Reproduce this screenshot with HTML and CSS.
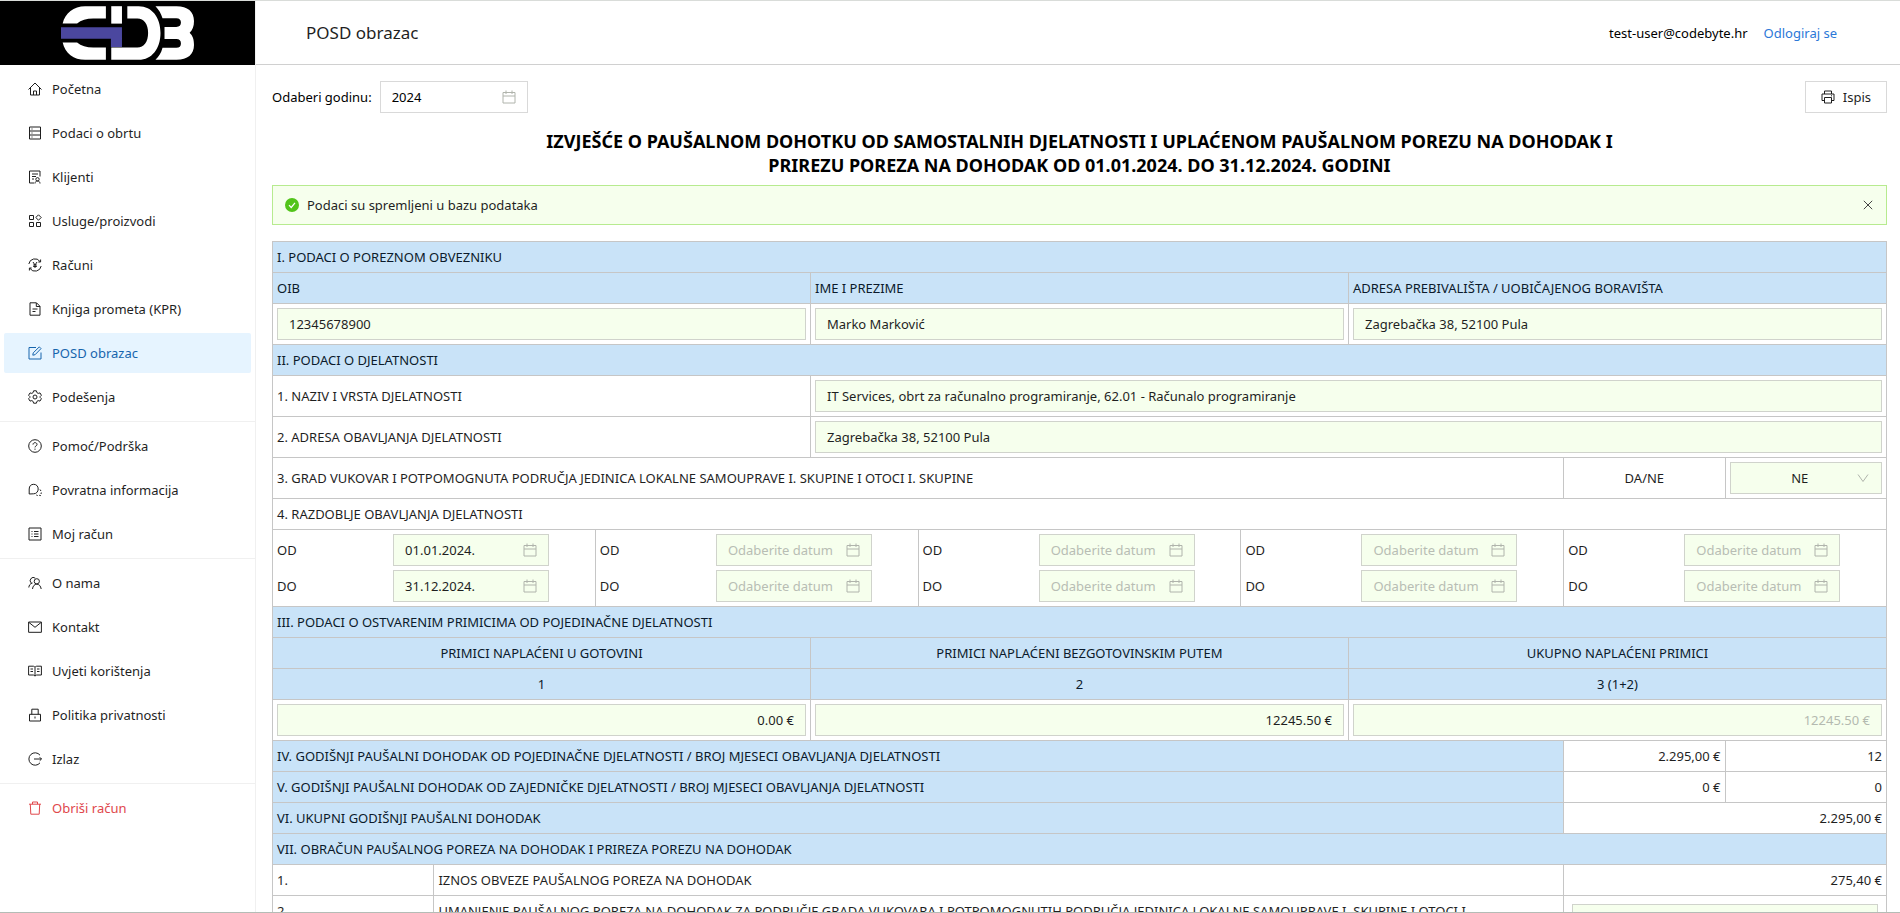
FILE: index.html
```
<!DOCTYPE html>
<html lang="hr">
	<head>
		<title>POSD obrazac</title>

		<meta name="viewport" content="width=device-width">
		<meta charset="utf-8">

		<link rel="stylesheet" href="styles.css">
	</head>

	<body>
		<!-- shared icons -->
		<svg class="defs" aria-hidden="true">
			<symbol id="i-calendar" viewBox="0 0 14 14"><path d="M1 2.500h12v10.500H1zM1 6h12M4 .5v3.500M10 .5v3.500"/></symbol>
			<symbol id="i-down" viewBox="0 0 14 14"><path d="M2 3.500l5 7 5-7"/></symbol>
		</svg>

		<div class="app">
			<aside class="sidebar">
				<a class="logo" href="#" aria-label="CDB">
					<svg viewBox="0 0 400 160">
						<path fill="#fff" d="M5 52C12 20 38 0 72 0H134V37H96C76 37 60 42 48 52Z"/>
						<path fill="#fff" d="M5 108C12 140 38 160 72 160H134V123H96C76 123 60 118 48 108Z"/>
						<path fill="#fff" d="M150 0H182V52H150Z"/>
						<path fill="#fff" d="M198 0H232C272 0 297 34 297 80S272 160 232 160H150V123H228C248 123 260 106 260 80S248 37 228 37H198Z"/>
						<path fill="#fff" fill-rule="evenodd" d="M282 0H345C378 0 397 16 397 44C397 60 393 70 384 79C393 88 397 98 397 116C397 144 378 160 345 160H282C292 150 299 140 303 124H344C354 124 358 119 358 111S354 98 344 98H309V62H344C354 62 358 57 358 49S354 36 344 36H303C299 22 292 10 282 0Z"/>
						<path fill="#4b479f" d="M0 63H182V122H149V97H0Z"/>
					</svg>
				</a>
				<nav class="menu">
					<ul>
						<li><a href="#"><svg class="icon" viewBox="0 0 14 14"><path d="M.5 7.500L7 1l6.500 6.500M2.500 6v7h9V6M5.500 13V9h3v4"/></svg>Početna</a></li>
						<li><a href="#"><svg class="icon" viewBox="0 0 14 14"><path d="M1.500 1h11v12h-11zM1.500 5h11M1.500 9h11M3.500 3h1M3.500 7h1M3.500 11h1"/></svg>Podaci o obrtu</a></li>
						<li><a href="#"><svg class="icon" viewBox="0 0 14 14"><path d="M6 13H1.500V1h10.500v5.500M4 4h6M4 6.500h4M4 9h2M7 13.500c0-1.500 1-2.500 2.500-2.500s2.500 1 2.500 2.500"/><circle cx="9.500" cy="9.300" r="1.700"/></svg>Klijenti</a></li>
						<li><a href="#"><svg class="icon" viewBox="0 0 14 14"><path d="M1.500 1.500h4v4h-4zM1.500 8.500h4v4h-4zM8.500 8.500h4v4h-4zM10.500.8l2.700 2.700-2.700 2.700-2.700-2.700z"/></svg>Usluge/proizvodi</a></li>
						<li><a href="#"><svg class="icon" viewBox="0 0 14 14"><path d="M.8 6A6.200 6.200 0 0 1 12 3.500M13.200 8A6.200 6.200 0 0 1 2 10.500M12.600 1.500v2.500h-2.300M1.400 12.500V10h2.300M5 4l2 3 2-3M7 7v3M5.200 7h3.600M5.200 8.500h3.600"/></svg>Računi</a></li>
						<li><a href="#"><svg class="icon" viewBox="0 0 14 14"><path d="M2 .8h6.500L12 4.300v8.900H2zM8.300 1v3.500H12M4.500 7h5M4.500 9.500h3"/></svg>Knjiga prometa (KPR)</a></li>
						<li><a class="selected" href="#"><svg class="icon" viewBox="0 0 14 14"><path d="M8 1.500H1v11.500h12V6.500M4.800 9.200l.4-2.300L11.300.9l1.700 1.700L7.100 8.700z"/></svg>POSD obrazac</a></li>
						<li><a href="#"><svg class="icon" viewBox="0 0 14 14"><path d="M5.600.8h2.800l.5 1.800 1.300.8 1.800-.5 1.400 2.400L12.100 6.600v.8l1.300 1.300-1.400 2.400-1.800-.5-1.300.8-.5 1.800H5.600l-.5-1.800-1.300-.8-1.800.5L.6 8.700l1.300-1.300v-.8L.6 5.300 2 2.900l1.800.5 1.300-.8z"/><circle cx="7" cy="7" r="2"/></svg>Podešenja</a></li>
					</ul>
					<ul>
						<li><a href="#"><svg class="icon" viewBox="0 0 14 14"><circle cx="7" cy="7" r="6.300"/><path d="M5 5.600C5 3 9 3 9 5.500 9 7 7 6.900 7 8.400M7 9.600v1.200"/></svg>Pomoć/Podrška</a></li>
						<li><a href="#"><svg class="icon" viewBox="0 0 14 14"><path d="M1.200 11V6C1.200 3 3 1.300 5.700 1.300S10.200 3.300 10.200 6 8.300 10.800 5.600 10.800zM12 6.500l1 1.500M13.300 9.500l-.3 1.500M12.800 12.600l-1.600-.3M9.700 12.600L8.300 12"/></svg>Povratna informacija</a></li>
						<li><a href="#"><svg class="icon" viewBox="0 0 14 14"><path d="M1 1h12v12H1zM6 4.500h4.500M6 7h4.500M6 9.500h4.500M3.500 4.500h1M3.500 7h1M3.500 9.500h1"/></svg>Moj račun</a></li>
					</ul>
					<ul>
						<li><a href="#"><svg class="icon" viewBox="0 0 14 14"><circle cx="8.800" cy="5.300" r="2.600"/><path d="M4.500 13c.3-3 2-4.800 4.300-4.800S12.700 10 13.200 13M3.300 7A2.800 2.800 0 1 1 7.300 2.200M.8 11.500C1 9.500 2 7.500 4.500 7"/></svg>O nama</a></li>
						<li><a href="#"><svg class="icon" viewBox="0 0 14 14"><path d="M.6 2h12.800v10.300H.6zM1 2.500l6 4.800 6-4.800"/></svg>Kontakt</a></li>
						<li><a href="#"><svg class="icon" viewBox="0 0 14 14"><path d="M.6 2.200h4.800L7 3.200l1.600-1h4.800v8.800H8.600L7 12l-1.600-1H.6zM7 3.500V12M2.500 5h2.500M2.500 7.500h2.500M9 5h2.500M9 7.500h2.500"/></svg>Uvjeti korištenja</a></li>
						<li><a href="#"><svg class="icon" viewBox="0 0 14 14"><path d="M1.500 6.300h11V13h-11zM3.800 6.300V1.200h6.400v5.100M7 8.500v2"/></svg>Politika privatnosti</a></li>
						<li><a href="#"><svg class="icon" viewBox="0 0 14 14"><path d="M12 3.200A6.200 6.200 0 1 0 12 10.800M6 7h7.500M11.700 5.200L13.500 7l-1.800 1.800"/></svg>Izlaz</a></li>
					</ul>
					<ul>
						<li><a class="danger" href="#"><svg class="icon" viewBox="0 0 14 14"><path d="M1 3.200h12M2.300 3.200l.5 10h8.400l.5-10M4.500 3.200V1h5v2.200"/></svg>Obriši račun</a></li>
					</ul>
				</nav>
			</aside>

			<div class="page">
				<header class="topbar">
					<h1>POSD obrazac</h1>
					<div class="user">
						<span>test-user@codebyte.hr</span>
						<a href="#">Odlogiraj se</a>
					</div>
				</header>

				<main>
					<div class="toolbar">
						<label for="year">Odaberi godinu:</label>
						<div class="picker year"><input id="year" type="text" value="2024"><svg class="icon"><use href="#i-calendar"/></svg></div>
						<button type="button" class="print"><svg class="icon" viewBox="0 0 14 14"><path d="M3.500 4V1h7v3M3.500 10.500H1V4h12v6.500h-2.500M3.500 7.500h7V13h-7zM10 5.800h1"/></svg>Ispis</button>
					</div>

					<h2>IZVJEŠĆE O PAUŠALNOM DOHOTKU OD SAMOSTALNIH DJELATNOSTI I UPLAĆENOM PAUŠALNOM POREZU NA DOHODAK I<br>PRIREZU POREZA NA DOHODAK OD 01.01.2024. DO 31.12.2024. GODINI</h2>

					<div class="alert" role="status">
						<svg class="check" viewBox="0 0 14 14"><circle cx="7" cy="7" r="7" fill="#52c41a"/><path d="M4 7.200l2.200 2.300L10 4.800" fill="none" stroke="#fff" stroke-width="1.200"/></svg>
						<span>Podaci su spremljeni u bazu podataka</span>
						<button type="button" class="close" aria-label="Zatvori"><svg viewBox="0 0 10 10"><path d="M.8.8l8.400 8.400M9.200.8L.8 9.200"/></svg></button>
					</div>

					<table class="posd">
						<!-- thirtieths of the width, so thirds and fifths share one grid -->
						<colgroup>
							<col class="w3"><col class="w3"><col class="w4"><col class="w2"><col class="w6"><col class="w2"><col class="w4"><col class="w3"><col class="w3">
						</colgroup>
						<tbody>
							<tr class="head"><th colspan="9">I. PODACI O POREZNOM OBVEZNIKU</th></tr>
							<tr class="head">
								<th colspan="3" id="oib">OIB</th>
								<th colspan="3" id="ime">IME I PREZIME</th>
								<th colspan="3" id="adresa">ADRESA PREBIVALIŠTA / UOBIČAJENOG BORAVIŠTA</th>
							</tr>
							<tr>
								<td colspan="3"><input type="text" aria-labelledby="oib" value="12345678900"></td>
								<td colspan="3"><input type="text" aria-labelledby="ime" value="Marko Marković"></td>
								<td colspan="3"><input type="text" aria-labelledby="adresa" value="Zagrebačka 38, 52100 Pula"></td>
							</tr>
							<tr class="head"><th colspan="9">II. PODACI O DJELATNOSTI</th></tr>
							<tr>
								<td colspan="3"><label for="naziv">1. NAZIV I VRSTA DJELATNOSTI</label></td>
								<td colspan="6"><input type="text" id="naziv" value="IT Services, obrt za računalno programiranje, 62.01 - Računalo programiranje"></td>
							</tr>
							<tr>
								<td colspan="3"><label for="sjediste">2. ADRESA OBAVLJANJA DJELATNOSTI</label></td>
								<td colspan="6"><input type="text" id="sjediste" value="Zagrebačka 38, 52100 Pula"></td>
							</tr>
							<tr>
								<td colspan="7">3. GRAD VUKOVAR I POTPOMOGNUTA PODRUČJA JEDINICA LOKALNE SAMOUPRAVE I. SKUPINE I OTOCI I. SKUPINE</td>
								<td class="center"><label for="dane">DA/NE</label></td>
								<td>
									<div class="select">
										<select id="dane"><option>NE</option><option>DA</option></select>
										<svg class="icon"><use href="#i-down"/></svg>
									</div>
								</td>
							</tr>
							<tr><td colspan="9">4. RAZDOBLJE OBAVLJANJA DJELATNOSTI</td></tr>
							<tr>
								<td colspan="2"><div class="period">
									<label for="od1">OD</label><div class="picker"><input id="od1" type="text" value="01.01.2024."><svg class="icon"><use href="#i-calendar"/></svg></div>
									<label for="do1">DO</label><div class="picker"><input id="do1" type="text" value="31.12.2024."><svg class="icon"><use href="#i-calendar"/></svg></div>
								</div></td>
								<td colspan="2"><div class="period">
									<label for="od2">OD</label><div class="picker"><input id="od2" type="text" placeholder="Odaberite datum"><svg class="icon"><use href="#i-calendar"/></svg></div>
									<label for="do2">DO</label><div class="picker"><input id="do2" type="text" placeholder="Odaberite datum"><svg class="icon"><use href="#i-calendar"/></svg></div>
								</div></td>
								<td><div class="period">
									<label for="od3">OD</label><div class="picker"><input id="od3" type="text" placeholder="Odaberite datum"><svg class="icon"><use href="#i-calendar"/></svg></div>
									<label for="do3">DO</label><div class="picker"><input id="do3" type="text" placeholder="Odaberite datum"><svg class="icon"><use href="#i-calendar"/></svg></div>
								</div></td>
								<td colspan="2"><div class="period">
									<label for="od4">OD</label><div class="picker"><input id="od4" type="text" placeholder="Odaberite datum"><svg class="icon"><use href="#i-calendar"/></svg></div>
									<label for="do4">DO</label><div class="picker"><input id="do4" type="text" placeholder="Odaberite datum"><svg class="icon"><use href="#i-calendar"/></svg></div>
								</div></td>
								<td colspan="2"><div class="period">
									<label for="od5">OD</label><div class="picker"><input id="od5" type="text" placeholder="Odaberite datum"><svg class="icon"><use href="#i-calendar"/></svg></div>
									<label for="do5">DO</label><div class="picker"><input id="do5" type="text" placeholder="Odaberite datum"><svg class="icon"><use href="#i-calendar"/></svg></div>
								</div></td>
							</tr>
							<tr class="head"><th colspan="9">III. PODACI O OSTVARENIM PRIMICIMA OD POJEDINAČNE DJELATNOSTI</th></tr>
							<tr class="head center">
								<th colspan="3" id="gotovina">PRIMICI NAPLAĆENI U GOTOVINI</th>
								<th colspan="3" id="bezgotovinski">PRIMICI NAPLAĆENI BEZGOTOVINSKIM PUTEM</th>
								<th colspan="3" id="ukupno">UKUPNO NAPLAĆENI PRIMICI</th>
							</tr>
							<tr class="head center">
								<th colspan="3">1</th>
								<th colspan="3">2</th>
								<th colspan="3">3 (1+2)</th>
							</tr>
							<tr class="amounts">
								<td colspan="3"><input type="text" aria-labelledby="gotovina" value="0.00 €"></td>
								<td colspan="3"><input type="text" aria-labelledby="bezgotovinski" value="12245.50 €"></td>
								<td colspan="3"><input type="text" aria-labelledby="ukupno" value="12245.50 €" disabled></td>
							</tr>
							<tr>
								<th class="fill" colspan="7">IV. GODIŠNJI PAUŠALNI DOHODAK OD POJEDINAČNE DJELATNOSTI / BROJ MJESECI OBAVLJANJA DJELATNOSTI</th>
								<td class="right">2.295,00 €</td>
								<td class="right">12</td>
							</tr>
							<tr>
								<th class="fill" colspan="7">V. GODIŠNJI PAUŠALNI DOHODAK OD ZAJEDNIČKE DJELATNOSTI / BROJ MJESECI OBAVLJANJA DJELATNOSTI</th>
								<td class="right">0 €</td>
								<td class="right">0</td>
							</tr>
							<tr>
								<th class="fill" colspan="7">VI. UKUPNI GODIŠNJI PAUŠALNI DOHODAK</th>
								<td class="right" colspan="2">2.295,00 €</td>
							</tr>
							<tr class="head"><th colspan="9">VII. OBRAČUN PAUŠALNOG POREZA NA DOHODAK I PRIREZA POREZU NA DOHODAK</th></tr>
							<tr>
								<td>1.</td>
								<td colspan="6">IZNOS OBVEZE PAUŠALNOG POREZA NA DOHODAK</td>
								<td class="right" colspan="2">275,40 €</td>
							</tr>
							<tr class="tall">
								<td>2.</td>
								<td colspan="6"><label for="umanjenje">UMANJENJE PAUŠALNOG POREZA NA DOHODAK ZA PODRUČJE GRADA VUKOVARA I POTPOMOGNUTIH PODRUČJA JEDINICA LOKALNE SAMOUPRAVE I. SKUPINE I OTOCI I.<br>SKUPINE</label></td>
								<td class="inset" colspan="2"><input type="text" id="umanjenje"></td>
							</tr>
						</tbody>
					</table>
				</main>
			</div>
		</div>
	</body>
</html>
```
FILE: styles.css
```
* {
	box-sizing: border-box;
}

html,body {
	margin: 0;
	padding: 0;
	height: 100%;
}

body {
	font-family: "Noto Sans", "Open Sans", sans-serif;
	font-size: 13px;
	line-height: 22px;
	color: #1f1f1f;
	background-color: #fff;
}

input,select,button {
	font: inherit;
	color: inherit;
	margin: 0;
}

a {
	text-decoration: none;
}

.defs {
	display: none;
}

.icon {
	flex: none;
	width: 14px;
	height: 14px;
	fill: none;
	stroke: currentColor;
}

.app {
	display: flex;
	height: 100vh;
	overflow: hidden;
	border-top: 1px solid #d9dcd9;
	border-bottom: 1px solid #b4bcb6;
}

/* sidebar */

.sidebar {
	flex: none;
	width: 256px;
	border-right: 1px solid #f0f0f0;
}

.logo {
	display: flex;
	justify-content: center;
	align-items: center;
	height: 64px;
	background-color: #000;
}

.logo svg {
	width: 134px;
	height: 54px;
}

.menu ul {
	list-style: none;
	margin: 0;
	padding: 4px 0;
	display: flex;
	flex-direction: column;
	gap: 4px;
}

.menu ul + ul {
	border-top: 1px solid #f0f0f0;
}

.menu a {
	display: flex;
	align-items: center;
	gap: 10px;
	height: 40px;
	margin: 0 4px;
	padding: 0 24px;
	border-radius: 2px;
	color: #1f1f1f;
}

.menu a.selected {
	background-color: #e6f4ff;
	color: #1765ad;
}

.menu a.danger {
	color: #e0474c;
}

/* page */

.page {
	flex: 1;
	min-width: 0;
}

.topbar {
	display: flex;
	justify-content: space-between;
	align-items: center;
	height: 64px;
	padding: 0 63px 0 50px;
	border-bottom: 1px solid #d0d0d0;
}

h1 {
	margin: 0;
	font-size: 17px;
	font-weight: 400;
}

.user {
	display: flex;
	gap: 16px;
	color: #000;
}

.user a {
	color: #2b78d8;
}

main {
	padding: 16px 13px 16px 16px;
}

.toolbar {
	display: flex;
	align-items: center;
	gap: 8px;
	color: #000;
}

.print {
	display: flex;
	align-items: center;
	gap: 8px;
	height: 32px;
	margin-left: auto;
	padding: 0 15px;
	border: 1px solid #d9d9d9;
	background-color: #fff;
	color: #1f1f1f;
}

h2 {
	margin: 16px 0 8px;
	font-size: 18px;
	line-height: 24px;
	font-weight: 700;
	text-align: center;
	color: #000;
}

.alert {
	display: flex;
	align-items: center;
	gap: 8px;
	height: 40px;
	margin-bottom: 16px;
	padding: 0 12px;
	border: 1px solid #b7eb8f;
	background-color: #f6ffed;
}

.check {
	width: 14px;
	height: 14px;
}

.close {
	display: flex;
	margin-left: auto;
	padding: 1px;
	border: 0;
	background: none;
}

.close svg {
	width: 10px;
	height: 10px;
	stroke: #444;
}

/* form */

.posd {
	width: 100%;
	table-layout: fixed;
	border-collapse: collapse;
}

.w2 { width: 6.6667%; }
.w3 { width: 10%; }
.w4 { width: 13.3333%; }
.w6 { width: 20%; }

.posd th,.posd td {
	padding: 4px;
	border: 1px solid #c6c6c6;
	font-weight: 400;
	text-align: left;
}

.posd .head th,.posd .fill {
	background-color: #c9e3f8;
	color: #0b1a2b;
}

.posd .center th,.posd .center {
	text-align: center;
}

.posd .right {
	text-align: right;
}

.posd .tall td {
	vertical-align: top;
}

.posd .inset {
	padding: 8px;
}

.posd input,.posd select {
	display: block;
	width: 100%;
	height: 32px;
	padding: 0 11px;
	border: 1px solid #d0d3cc;
	border-radius: 0;
	background-color: #f6ffed;
}

.posd .amounts input {
	text-align: right;
}

.posd input:disabled {
	color: #b4bab0;
}

input::placeholder {
	color: #b8bdb4;
	opacity: 1;
}

.picker,.select {
	display: grid;
	align-items: center;
}

.picker > *,.select > * {
	grid-area: 1 / 1;
}

.picker .icon,.select .icon {
	justify-self: end;
	margin-right: 12px;
	color: #b0b4ac;
	pointer-events: none;
}

.year input {
	width: 148px;
	height: 32px;
	padding: 0 11px;
	border: 1px solid #d9d9d9;
	background-color: #fff;
}

.posd select {
	appearance: none;
	padding-right: 23px;
	text-align: center;
	text-align-last: center;
}

.period {
	display: grid;
	grid-template-columns: 37% 156px;
	align-items: center;
	row-gap: 4px;
}
```
